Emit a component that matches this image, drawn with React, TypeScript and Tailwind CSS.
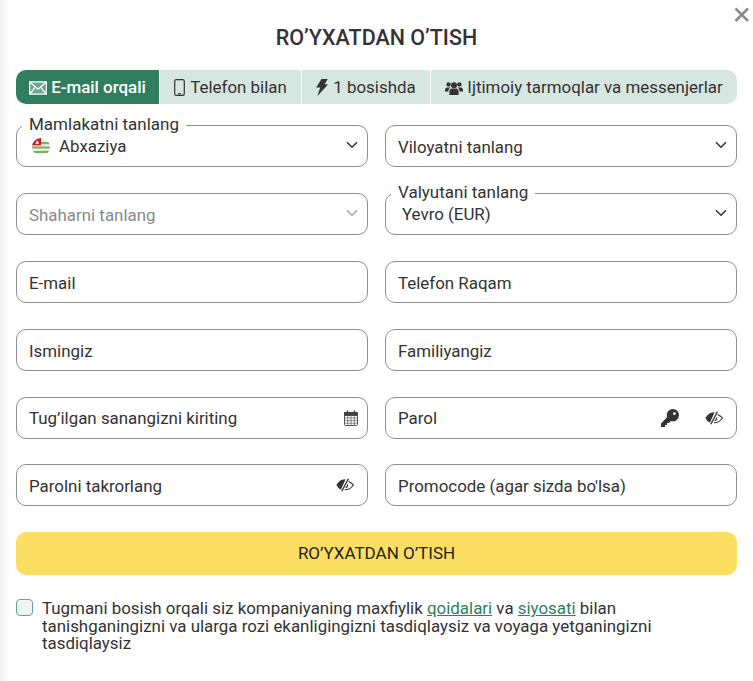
import React from "react";

const Chevron = ({ muted }: { muted?: boolean }) => (
  <svg width="12" height="12" viewBox="0 0 16 16" fill="none" stroke={muted ? "#a8a8a8" : "#343a40"} strokeWidth="2.2" strokeLinecap="round" strokeLinejoin="round" className="mb-[2px] mr-[-3px] shrink-0">
    <path d="m2 5 6 6 6-6" />
  </svg>
);

const Envelope = () => (
  <svg width="18" height="14" viewBox="0 0 18 14" fill="none" stroke="#fff" strokeWidth="1.3" className="shrink-0">
    <rect x="0.6" y="0.9" width="16.8" height="12.2" fill="rgba(255,255,255,0.3)" />
    <path d="M1 1.2 9 8.2l8-7M1 12.8l5.6-7M17 12.8l-5.6-7" />
  </svg>
);

const Phone = () => (
  <svg width="11" height="17" viewBox="0 0 11 17" fill="none" stroke="#333" strokeWidth="1.2" className="shrink-0">
    <rect x="0.7" y="0.7" width="9.6" height="15.6" rx="1.6" />
    <path d="M4 14.8h3" />
  </svg>
);

const Bolt = () => (
  <svg width="12" height="17" viewBox="0 0 12 17" fill="#333" className="shrink-0">
    <path d="M5.5 0 11.8 0 8.6 5.2 12 5.4 1.4 17 4.2 8.6 0.2 8.4z" />
  </svg>
);

const Users = () => (
  <svg width="18" height="14" viewBox="0 0 18 14" fill="#333" className="shrink-0">
    <circle cx="9" cy="4.2" r="3" />
    <circle cx="3.6" cy="3.4" r="2.2" />
    <circle cx="14.4" cy="3.4" r="2.2" />
    <path d="M4.4 14V10.4C4.4 8.4 6 7.6 7 7.6h4c1 0 2.6.8 2.6 2.8V14z" />
    <path d="M0 9.4C0 7.4 1 6.4 2.2 6.4h3.4C4 7.3 3.4 8.6 3.4 10.4H0z" />
    <path d="M18 9.4C18 7.4 17 6.4 15.8 6.4h-3.4c1.6.9 2.2 2.2 2.2 4H18z" />
  </svg>
);

const Key = () => (
  <svg width="18" height="18" viewBox="0 0 18 18" className="shrink-0">
    <path fillRule="evenodd" fill="#333" d="M11.8 0A6.2 6.2 0 0 1 18 6.2a6.2 6.2 0 0 1-8.2 5.8L8 14H6v2H4v2H0v-3.6L6 8.2A6.2 6.2 0 0 1 11.8 0zM13.4 3.2a1.4 1.4 0 1 0 0 2.8 1.4 1.4 0 0 0 0-2.8z" />
  </svg>
);

const Eye = () => (
  <svg width="18" height="14" viewBox="0 0 18 14" className="shrink-0">
    <path fill="#333" d="M9.6 1.2C5 1 2 4 .4 7 1.6 9.4 3.2 10.8 5 11.6z" />
    <path fill="#333" d="M11.8 0.4 13 1 6.4 13.6l-1.2-.6z" />
    <path fill="none" stroke="#333" strokeWidth="1.1" d="M12.6 3.4C14.6 4.4 16.4 5.6 17.4 7c-1.6 2.6-4.4 4.8-8.6 4.8" />
    <path fill="none" stroke="#333" strokeWidth="1.1" d="M11.6 6.4a3 3 0 0 1-2 3.4" />
  </svg>
);

const Calendar = () => (
  <svg width="14" height="16" viewBox="0 0 14 16" fill="none" stroke="#444" strokeWidth="0.9" className="shrink-0">
    <rect x="0.5" y="2.5" width="13" height="13" rx="1" />
    <rect x="0.5" y="2.5" width="13" height="3" fill="#444" />
    <path d="M3.5 0.5v3M10.5 0.5v3" strokeWidth="1.5" />
    <path d="M0.5 8h13M0.5 10.6h13M0.5 13.2h13M3.7 5.5v10M7 5.5v10M10.3 5.5v10" strokeWidth="0.6" />
  </svg>
);

const Flag = () => (
  <svg width="18" height="18" viewBox="0 0 18 18" className="shrink-0">
    <defs>
      <clipPath id="flagCircle"><circle cx="9" cy="9" r="9" /></clipPath>
    </defs>
    <g clipPath="url(#flagCircle)">
      <rect width="18" height="18" fill="#f2f6e8" />
      <rect x="0" y="4" width="18" height="2.2" fill="#7fb069" />
      <rect x="0" y="8.4" width="18" height="2.2" fill="#7fb069" />
      <rect x="0" y="12.8" width="18" height="2.2" fill="#7fb069" />
      <rect x="0" y="0" width="9" height="7.4" fill="#c8202f" />
      <path d="M3.4 6 5.4 2.2 7 5.4z" fill="#fff" />
    </g>
  </svg>
);

const Field = ({
  text,
  muted,
  legend,
  children,
  indent,
}: {
  text: React.ReactNode;
  muted?: boolean;
  legend?: string;
  children?: React.ReactNode;
  indent?: string;
}) => (
  <div className="relative flex h-[42px] items-center rounded-[10px] border border-[#8f8f8f] bg-white pl-3 pr-[12px]">
    {legend && (
      <span className="absolute left-[5px] top-[-12px] bg-white px-[7px] text-[17px] leading-[20px] text-[#333]">
        {legend}
      </span>
    )}
    <span className={`flex-1 text-[16.9px] ${indent ?? "pt-[3px]"} ${muted ? "text-[#8a8a8a]" : "text-[#333]"}`}>{text}</span>
    {children}
  </div>
);

export default function App() {
  return (
    <div className="relative h-[681px] w-[753px] overflow-hidden bg-white text-[#333] font-['Roboto',sans-serif]">
      <div className="absolute inset-y-0 left-0 w-[10px] bg-gradient-to-r from-[#f0f0f0] to-white" />
      <svg width="16" height="16" viewBox="0 0 16 16" className="absolute left-[734px] top-[7px]" stroke="#8c8c8c" strokeWidth="2.6" fill="none">
        <path d="M1.5 1.5 14 14M14 1.5 1.5 14" />
      </svg>

      <div className="relative px-4">
        <h1 className="flex h-[70px] items-center justify-center pt-[6px] text-[21.5px] font-medium text-[#333]">
          RO’YXATDAN O’TISH
        </h1>

        <div className="flex h-[34px] w-[721px] gap-px text-[16.9px]">
          <div className="flex w-[143px] items-center justify-center gap-[4px] rounded-l-[10px] bg-[#2f7f5f] pt-[1px] font-medium text-white">
            <Envelope />E-mail orqali
          </div>
          <div className="flex w-[141px] items-center justify-center gap-[5px] bg-[#d6e6e0] pt-[1px]">
            <Phone />Telefon bilan
          </div>
          <div className="flex w-[128px] items-center justify-center gap-[5px] bg-[#d6e6e0] pt-[1px]">
            <Bolt />1 bosishda
          </div>
          <div className="flex flex-1 items-center justify-center gap-[4px] rounded-r-[10px] bg-[#d6e6e0] pt-[1px]">
            <Users />Ijtimoiy tarmoqlar va messenjerlar
          </div>
        </div>

        <div className="mt-[21.4px] grid grid-cols-[352px_352px] gap-x-[17px] gap-y-[25.8px]">
          <Field legend="Mamlakatni tanlang" indent="pt-[1px]" text={<span className="flex items-center gap-[9px]"><span className="ml-[3px]"><Flag /></span>Abxaziya</span>}>
            <Chevron />
          </Field>
          <Field text="Viloyatni tanlang"><Chevron /></Field>
          <Field text="Shaharni tanlang" muted><Chevron muted /></Field>
          <Field legend="Valyutani tanlang" text="Yevro (EUR)" indent="pl-1"><Chevron /></Field>
          <Field text="E-mail" />
          <Field text="Telefon Raqam" />
          <Field text="Ismingiz" />
          <Field text="Familiyangiz" />
          <Field text="Tug’ilgan sanangizni kiriting"><span className="mr-[-3px]"><Calendar /></span></Field>
          <Field text="Parol">
            <span className="mr-[26px]"><Key /></span>
            <span className="mr-[1px]"><Eye /></span>
          </Field>
          <Field text="Parolni takrorlang">
            <span className="mr-[1px]"><Eye /></span>
          </Field>
          <Field text="Promocode (agar sizda bo'lsa)" />
        </div>

        <button className="mt-[26px] flex h-[43px] w-[721px] items-center justify-center rounded-[10px] bg-[#fcdf62] text-[17px] text-[#222]">
          RO’YXATDAN O’TISH
        </button>

        <div className="mt-[25px] flex w-[721px] gap-[9px]">
          <span className="mt-[-1px] h-[17px] w-[17px] shrink-0 rounded-[4px] border border-[#5fa88a] bg-[#eef6f3]" />
          <p className="w-[660px] text-[16.9px] leading-[17.5px] text-[#333]">
            Tugmani bosish orqali siz kompaniyaning maxfiylik <a className="text-[#2f7f5f] underline">qoidalari</a> va <a className="text-[#2f7f5f] underline">siyosati</a> bilan tanishganingizni va ularga rozi ekanligingizni tasdiqlaysiz va voyaga yetganingizni tasdiqlaysiz
          </p>
        </div>
      </div>
    </div>
  );
}
